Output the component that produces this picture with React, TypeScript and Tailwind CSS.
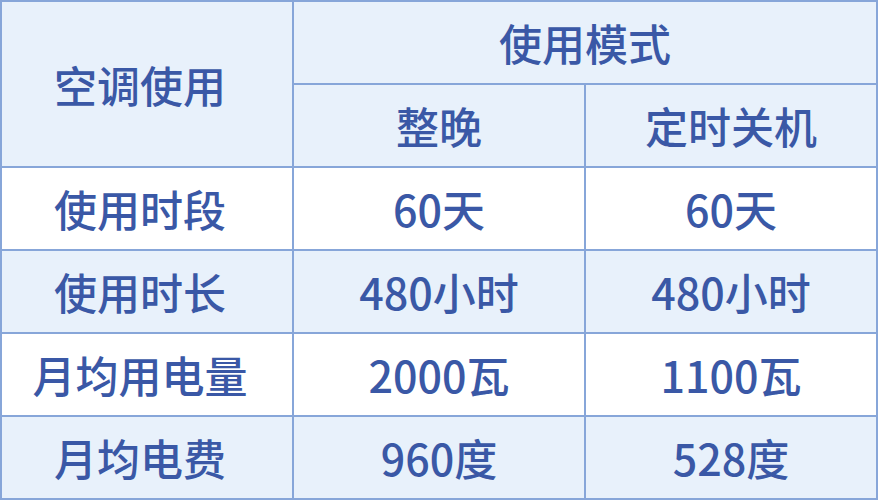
const ROWS = [
  { label: "使用时段", a: "60天", b: "60天", alt: false },
  { label: "使用时长", a: "480小时", b: "480小时", alt: true },
  { label: "月均用电量", a: "2000瓦", b: "1100瓦", alt: false },
  { label: "月均电费", a: "960度", b: "528度", alt: true },
]

function Cell({ children, className = "" }: { children: React.ReactNode; className?: string }) {
  return (
    <div className={`flex items-center justify-center text-[43px] font-medium text-[#3a58a6] ${className}`}>
      {children}
    </div>
  )
}

export default function App() {
  return (
    <div
      className="w-[878px] h-[500px] bg-[#87a6d9] p-[2px] grid grid-cols-3 grid-rows-6 gap-[2px]"
      style={{ fontFamily: '"Noto Sans CJK SC", "Noto Sans", sans-serif' }}
    >
      <Cell className="row-span-2 bg-[#e8f1fb] pr-[14px]">空调使用</Cell>
      <Cell className="col-span-2 bg-[#e8f1fb] font-bold">使用模式</Cell>
      <Cell className="bg-[#e8f1fb]">整晚</Cell>
      <Cell className="bg-[#e8f1fb]">定时关机</Cell>
      {ROWS.map((row) => {
        const bg = row.alt ? "bg-[#e8f1fb]" : "bg-white"
        return [
          <Cell key={row.label + "l"} className={`${bg} pr-[14px]`}>{row.label}</Cell>,
          <Cell key={row.label + "a"} className={bg}>{row.a}</Cell>,
          <Cell key={row.label + "b"} className={bg}>{row.b}</Cell>,
        ]
      })}
    </div>
  )
}
